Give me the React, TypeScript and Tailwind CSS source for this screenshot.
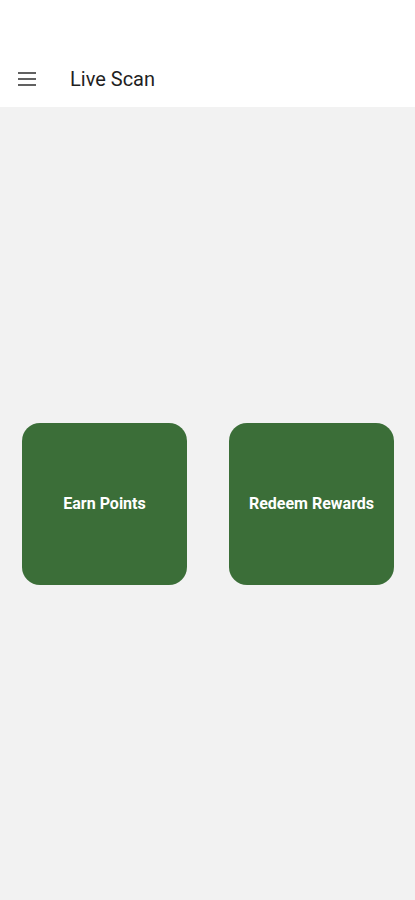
export default function App() {
  return (
    <div
      className="min-h-screen flex flex-col bg-[#f2f2f2]"
      style={{ fontFamily: "Roboto, 'Liberation Sans', sans-serif" }}
    >
      {/* Top bar */}
      <header className="h-[107px] bg-white flex items-end pb-[14px]">
        <div className="flex items-center h-[28px]">
          <button className="ml-[18px] w-[18px] flex flex-col gap-[4px]" aria-label="Menu">
            <span className="block h-[2px] w-full bg-[#616161]" />
            <span className="block h-[2px] w-full bg-[#616161]" />
            <span className="block h-[2px] w-full bg-[#616161]" />
          </button>
          <h1 className="ml-[34px] text-[20px] text-[#1f1f1f] leading-none">Live Scan</h1>
        </div>
      </header>

      {/* Actions */}
      <main className="flex-1 flex items-center justify-between pl-[22px] pr-[21px]">
        {["Earn Points", "Redeem Rewards"].map((label) => (
          <button
            key={label}
            className="w-[165px] h-[162px] rounded-[18px] bg-[#3b6e38] flex items-center justify-center text-white font-bold text-[16px]"
          >
            {label}
          </button>
        ))}
      </main>
    </div>
  );
}
